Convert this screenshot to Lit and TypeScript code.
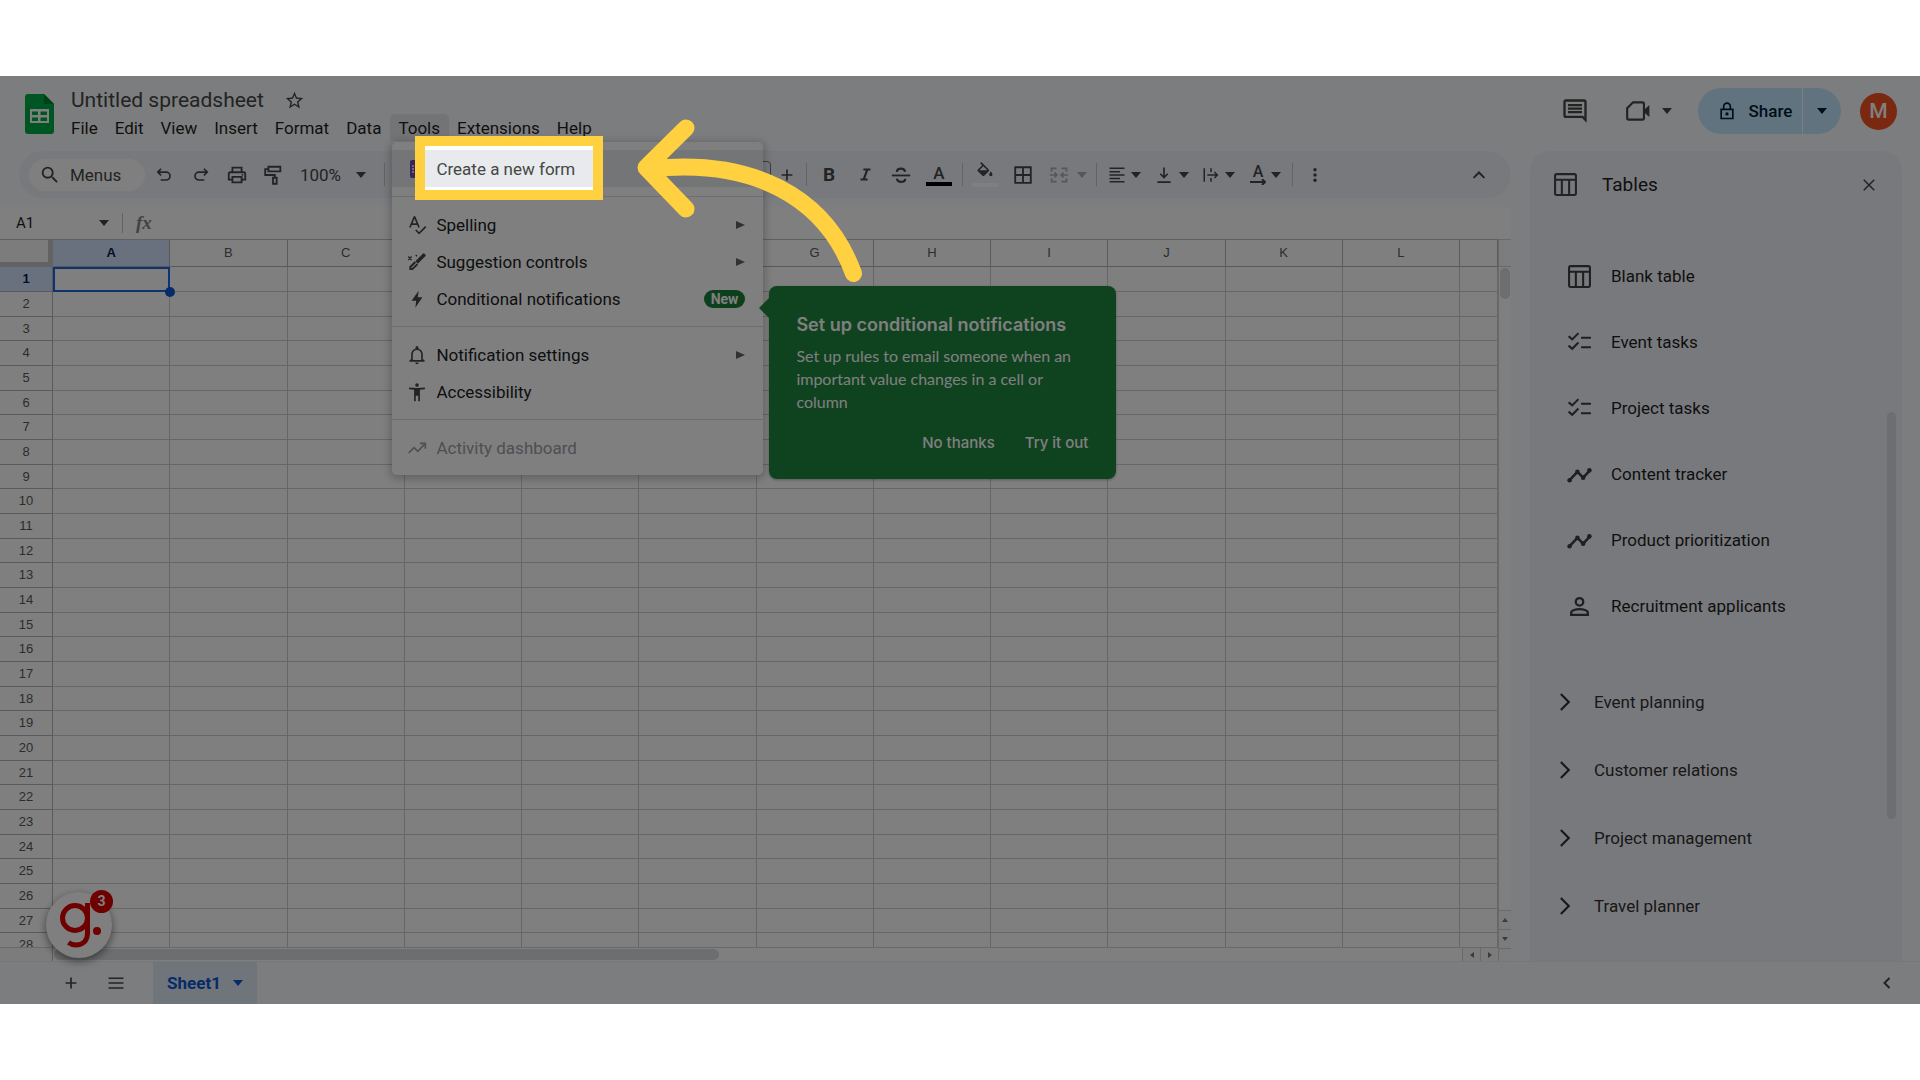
import { LitElement, html, css, svg, nothing } from "lit";
import { customElement } from "lit/decorators.js";
import { classMap } from "lit/directives/class-map.js";

const ic = (body: unknown, size = 22) =>
  html`<svg class="ic" width=${size} height=${size} viewBox="0 0 24 24" aria-hidden="true">${body}</svg>`;
const fill = (d: string) => svg`<path fill="currentColor" fill-rule="evenodd" d=${d} />`;
const line = (d: string, w = 2) =>
  svg`<path fill="none" stroke="currentColor" stroke-width=${w} d=${d} />`;

const caret = html`<svg class="caret" width="10" height="6" viewBox="0 0 10 6" aria-hidden="true"><path fill="currentColor" d="M0 0h10L5 6z" /></svg>`;

const icons = {
  search: fill("M15.5 14h-.79l-.28-.27A6.47 6.47 0 0 0 16 9.5 6.5 6.5 0 1 0 9.5 16c1.61 0 3.09-.59 4.23-1.57l.27.28v.79l5 4.99L20.49 19l-4.99-5zm-6 0C7.01 14 5 11.99 5 9.5S7.01 5 9.5 5 14 7.01 14 9.5 11.99 14 9.5 14z"),
  star: fill("M22 9.24l-7.19-.62L12 2 9.19 8.63 2 9.24l5.46 4.73L5.82 21 12 17.27 18.18 21l-1.63-7.03L22 9.24zM12 15.4l-3.76 2.27 1-4.28-3.32-2.88 4.38-.38L12 6.1l1.71 4.04 4.38.38-3.32 2.88 1 4.28L12 15.4z"),
  comment: fill("M22 4c0-1.1-.9-2-2-2H4c-1.1 0-2 .9-2 2v12c0 1.1.9 2 2 2h14l4 4V4zM20 4v13.17L18.83 16H4V4h16zM6 12h12v2H6zm0-3h12v2H6zm0-3h12v2H6z"),
  meet: svg`${line("M7.5 4H16a1.5 1.5 0 0 1 1.500 1.500V18.500A1.500 1.500 0 0 1 16 20H3.500A1.500 1.500 0 0 1 2 18.500V9.500z")}${fill("M18 10.500l4.500-4v11l-4.500-4z")}`,
  lock: svg`${line("M5 10h14v11H5zM8 10V6.500a4 4 0 0 1 8 0V10")}<circle cx="12" cy="15.500" r="2" fill="currentColor" />`,
  undo: line("M8.500 4.500L4.500 8.500l4 4M5 8.500h9.500a4.700 4.700 0 0 1 0 9.500H8"),
  redo: line("M15.500 4.500l4 4-4 4M19 8.500H9.500a4.700 4.700 0 0 0 0 9.500H16"),
  print: svg`${line("M7 8V4h10v4M7 17H3v-6.500A1.500 1.500 0 0 1 4.500 9h15a1.500 1.500 0 0 1 1.500 1.500V17h-4M7 14h10v6H7z")}<circle cx="18" cy="11.800" r="1" fill="currentColor" />`,
  paint: line("M7 3h13v5H7zM7 5.500H3.500V12H14v3M12 15h4v6.500h-4z"),
  plus: line("M12 5.500v13M5.500 12h13"),
  minus: line("M5.500 12h13"),
  italic: line("M9 5h10M5 19h10M14.500 5l-5 14", 3),
  strike: svg`${line("M2 12.500h20")}${line("M16.500 8.500C16 6 14 5 12 5 9.500 5 7.700 6.200 7.500 8.500M7.500 16c.3 2.300 2.200 3.500 4.500 3.500s4.500-1.200 4.500-3.500", 2.400)}`,
  bucket: svg`${fill("M16.560 8.940L7.620 0 6.210 1.410l2.380 2.380-5.150 5.150a1.500 1.500 0 0 0 0 2.120l5.500 5.500c.58.58 1.540.58 2.120 0l5.500-5.500c.58-.58.58-1.530 0-2.120zM5.210 10L10 5.210 14.790 10zM19 11.500s-2 2.170-2 3.500a2 2 0 0 0 4 0c0-1.330-2-3.500-2-3.500z")}`,
  borders: line("M3.500 3.500h17v17h-17zM12 3.500v17M3.500 12h17"),
  merge: line("M3 8V4h6M15 4h6v4M3 16v4h6M15 20h6v-4M1 12h8M6.500 9l3 3-3 3M23 12h-8M17.500 9l-3 3 3 3"),
  align: line("M2 3h20M2 7.500h14M2 12h20M2 16.500h14M2 21h20"),
  bottom: line("M12 3v12M7.500 10.500L12 15l4.500-4.500M4 20.500h16"),
  wrap: line("M3 3v18M12 3v5M12 16v5M7 12h13M16.500 8l4 4-4 4"),
  dots: svg`<circle cx="12" cy="5" r="2.300" fill="currentColor" /><circle cx="12" cy="12" r="2.300" fill="currentColor" /><circle cx="12" cy="19" r="2.300" fill="currentColor" />`,
  up: line("M5.500 15.500L12 9l6.500 6.500", 2.400),
  left: line("M15 6l-6 6 6 6", 2.400),
  right: line("M7 2.500L16.500 12 7 21.500", 2.600),
  close: line("M5 5l14 14M19 5L5 19"),
  rows: line("M2 5.500h20M2 12h20M2 18.500h20"),
  table: svg`<rect x="2" y="2" width="20" height="20" rx="1.500" fill="none" stroke="currentColor" stroke-width="2" />${line("M2 7.500h20M8.500 7.500V22M15.500 7.500V22")}`,
  tasks: line("M1.500 6l3.500 3 6-6M1.500 15l3.500 3 6-6M13.500 7.500H23M13.500 16.500H23"),
  chart: svg`${line("M2.500 17.500l7.500-8 5.500 5.500 6.500-7", 2.400)}<circle cx="2.500" cy="17.500" r="2.200" fill="currentColor" /><circle cx="10" cy="9.500" r="2.200" fill="currentColor" /><circle cx="15.500" cy="15" r="2.200" fill="currentColor" /><circle cx="21.500" cy="8" r="2.200" fill="currentColor" />`,
  person: svg`<circle cx="12" cy="7.500" r="3.600" fill="none" stroke="currentColor" stroke-width="2.200" />${line("M4 20V18c0-2.300 4.800-3.500 8-3.500s8 1.200 8 3.500v2z", 2.200)}`,
  spell: svg`${line("M3.500 15L8.700 2.500h.6L14.500 15M5.500 11h7")}${line("M10.500 18l4 4L22.500 14")}`,
  wand: svg`${fill("M16.500 4.500L19 2a1.500 1.500 0 0 1 2 0l1 1a1.500 1.500 0 0 1 0 2l-2.500 2.500L13 14l-3-3z")}${line("M10 12l-6 6v2.500h2.500l6-6", 2.400)}${line("M1.500 5.500l4 4M5.500 5.500l-4 4M10.500 3.500l1.500 1.500", 1.600)}`,
  bolt: fill("M14 2L5.500 14H11l-1 8.500L18.500 10H13z"),
  bell: fill("M12 23c1.100 0 2-.9 2-2h-4c0 1.100.9 2 2 2zm7-6v-6c0-3.070-1.900-5.940-5.200-6.620V3a1.800 1.800 0 0 0-3.600 0v1.380C6.900 5.060 5 7.920 5 11v6l-2 1v2h18v-2l-2-1zm-2 1H7v-7c0-2.700 2-5 5-5s5 2.300 5 5v7z"),
  access: fill("M12 1.500a2.200 2.200 0 1 1 0 4.400 2.200 2.200 0 0 1 0-4.400zM21.500 8.700L15.500 9.300V23h-2v-6.500h-3V23h-2V9.300L2.500 8.700V6.700C8 7.300 16 7.300 21.500 6.700z"),
  trend: line("M2 18l6.500-6.500 4.500 4.500L21.500 7M15.500 6.500H22V13"),
};

const COLS = "ABCDEFGHIJKL".split("");
const ROWS = Array.from({ length: 28 }, (_, i) => i + 1);

const TABLES: [keyof typeof icons, string][] = [
  ["table", "Blank table"],
  ["tasks", "Event tasks"],
  ["tasks", "Project tasks"],
  ["chart", "Content tracker"],
  ["chart", "Product prioritization"],
  ["person", "Recruitment applicants"],
];
const SECTIONS = ["Event planning", "Customer relations", "Project management", "Travel planner"];

const base = css`
  * { box-sizing: border-box; }
  button, input { font: inherit; color: inherit; background: none; border: 0; padding: 0; margin: 0; }
  button { display: inline-flex; align-items: center; justify-content: center; white-space: nowrap; }
  ul { list-style: none; margin: 0; padding: 0; }
  .ic, .caret { display: block; flex: none; }
`;

@customElement("tools-menu")
export class ToolsMenu extends LitElement {
  static styles = [base, css`
    :host { display: block; width: 371px; }
    .menu { background: #fff; border-radius: 5px; padding: 8px 0 9px; box-shadow: 0 2px 8px 2px rgba(60, 64, 67, 0.3); }
    .item { width: 100%; height: 37px; padding: 0 18px 0 15px; gap: 9px; justify-content: flex-start; color: #202124; font-size: 17px; }
    .item .ic { color: #444746; }
    .on { background: #e8eaed; color: #444746; }
    .off, .off .ic { color: #9aa0a6; }
    .label { flex: 1; text-align: left; }
    .sub { color: #5f6368; }
    hr { border: 0; height: 1px; margin: 9px 0; background: #dadce0; }
    .new { background: #188038; color: #fff; font-size: 14px; font-weight: 700; line-height: 18px; padding: 0 7px; border-radius: 9px; }
    .tip { position: absolute; left: 377px; top: 144px; width: 347px; background: #1e843e; color: #fff; border-radius: 8px; padding: 27px 20px 21px 27px; font-family: Inter, sans-serif; box-shadow: 0 1px 3px rgba(0, 0, 0, 0.3); }
    .tip::before { content: ""; position: absolute; left: -10px; top: 11px; border: solid transparent; border-width: 11px 11px 11px 0; border-right-color: #1e843e; }
    h2 { margin: 0; font-size: 18px; line-height: 24px; font-weight: 600; }
    p { margin: 7px 0 0; font-family: Lato, sans-serif; font-size: 16px; line-height: 23px; padding-right: 20px; }
    .acts { display: flex; justify-content: flex-end; gap: 14px; margin-top: 13px; }
    .acts button { height: 32px; padding: 0 8px; font-size: 15px; font-weight: 500; }
  `];
  item(icon: unknown, label: string, end: unknown = nothing, cls = "") {
    return html`<button class="item ${cls}" role="menuitem" ?disabled=${cls === "off"}>${icon}<span class="label">${label}</span>${end}</button>`;
  }
  render() {
    const sub = html`<svg class="sub" width="9" height="8" viewBox="0 0 9 8" aria-hidden="true"><path fill="currentColor" d="M0 0l9 4-9 4z" /></svg>`;
    const form = html`<svg class="ic" width="20" height="20" viewBox="0 0 20 20" aria-hidden="true"><rect x="3" y="1" width="14" height="18" rx="2" fill="#7248b9" /><path stroke="#fff" stroke-width="1.500" d="M5 7h2M5 10h2M5 13h2M9 7h5M9 10h5M9 13h5" /></svg>`;
    return html`
      <div class="menu" role="menu">
        ${this.item(form, "Create a new form", nothing, "on")}
        <hr />
        ${this.item(ic(icons.spell, 20), "Spelling", sub)}
        ${this.item(ic(icons.wand, 20), "Suggestion controls", sub)}
        ${this.item(ic(icons.bolt, 20), "Conditional notifications", html`<span class="new">New</span>`)}
        <hr />
        ${this.item(ic(icons.bell, 20), "Notification settings", sub)}
        ${this.item(ic(icons.access, 20), "Accessibility")}
        <hr />
        ${this.item(ic(icons.trend, 20), "Activity dashboard", nothing, "off")}
      </div>
      <section class="tip">
        <h2>Set up conditional notifications</h2>
        <p>Set up rules to email someone when an important value changes in a cell or column</p>
        <div class="acts"><button>No thanks</button><button>Try it out</button></div>
      </section>`;
  }
}

@customElement("sheet-toolbar")
export class SheetToolbar extends LitElement {
  static styles = [base, css`
    :host { display: block; }
    .bar { display: flex; align-items: center; height: 47px; margin-left: 19px; padding: 0 14px 0 10px; background: #f0f3fa; border-radius: 24px; color: #444746; }
    .find { width: 116px; height: 32px; background: #fff; border-radius: 16px; gap: 9px; padding-left: 10px; justify-content: flex-start; font-size: 17px; }
    .b { width: 36px; height: 36px; flex: none; }
    .u { width: 38px; }
    .w { width: 40px; }
    .n { width: 32px; }
    .zoom { width: 84px; gap: 15px; font-size: 17px; }
    .font { width: 280px; gap: 14px; font-size: 17px; }
    .size { width: 36px; height: 28px; text-align: center; border: 1px solid #747775; border-radius: 4px; font-size: 17px; }
    .sep { width: 1px; height: 23px; margin: 0 4px 0 3px; background: #c7c7c7; flex: none; }
    .wide { margin: 0 10px 0 9px; }
    .combo { width: 47px; height: 36px; gap: 5px; flex: none; }
    .m { width: 50px; gap: 8px; }
    .faded { opacity: 0.4; }
    .bold { font: 700 19px Roboto, sans-serif; }
    .ink { flex-direction: column; font: 500 17px/18px Roboto, sans-serif; }
    .ink::after { content: ""; width: 26px; height: 4px; background: #000; }
    .pour { flex-direction: column; gap: 1px; }
    .pour::after { content: ""; width: 26px; height: 4px; background: #fff; }
    .rot { display: flex; flex-direction: column; align-items: center; font: 500 16px/14px Roboto, sans-serif; }
    .end { margin-left: auto; }
  `];
  render() {
    const combo = (icon: unknown, label: string, cls = "") =>
      html`<button class="combo ${cls}" aria-label=${label}>${icon}${caret}</button>`;
    const b = (icon: unknown, label: string, cls = "") =>
      html`<button class="b ${cls}" aria-label=${label}>${icon}</button>`;
    return html`<div class="bar" role="toolbar">
      <button class="find">${ic(icons.search)}Menus</button>
      ${b(ic(icons.undo, 20), "Undo", "u")}${b(ic(icons.redo, 20), "Redo")}${b(ic(icons.print), "Print")}${b(ic(icons.paint), "Paint format")}
      <button class="zoom" aria-label="Zoom">100% ${caret}</button>
      <span class="sep wide"></span>
      <button class="font">Default (Arial) ${caret}</button>
      <span class="sep wide"></span>
      ${b(ic(icons.minus, 20), "Decrease font size", "w")}
      <input class="size" aria-label="Font size" value="10" />
      ${b(ic(icons.plus, 20), "Increase font size", "n")}
      <span class="sep"></span>
      ${b("B", "Bold", "bold")}${b(ic(icons.italic, 17), "Italic")}${b(ic(icons.strike), "Strikethrough")}
      ${b("A", "Text color", "ink w")}
      <span class="sep"></span>
      ${b(ic(icons.bucket, 20), "Fill color", "pour")}${b(ic(icons.borders, 22), "Borders", "w")}
      ${combo(ic(icons.merge, 20), "Merge cells", "m faded")}
      <span class="sep"></span>
      ${combo(ic(icons.align, 18), "Horizontal align")}${combo(ic(icons.bottom, 20), "Vertical align")}${combo(ic(icons.wrap, 18), "Text wrapping")}
      ${combo(html`<span class="rot">A<svg width="16" height="6" viewBox="0 0 16 6" aria-hidden="true"><path fill="none" stroke="currentColor" stroke-width="2" d="M0 3h14M12 0l3 3-3 3" /></svg></span>`, "Text rotation")}
      <span class="sep"></span>
      ${b(ic(icons.dots, 18), "More")}
      ${b(ic(icons.up, 20), "Hide the menus", "end")}
    </div>`;
  }
}

@customElement("sheet-grid")
export class SheetGrid extends LitElement {
  static styles = [base, css`
    :host { display: flex; flex: 1 1 0px; min-height: 0; overflow: hidden; background: #fff; }
    .main { flex: 1; min-width: 0; display: flex; flex-direction: column; }
    .clip { flex: 1 1 0px; min-height: 0; overflow: hidden; }
    table { width: 100%; table-layout: fixed; border-collapse: separate; border-spacing: 0; border-top: 1px solid #c0c0c0; }
    th, td { padding: 0; height: 25px; border: solid #cfcfcf; border-width: 0 1px 1px 0; line-height: 16px; }
    tr:nth-child(3n) th, tr:nth-child(3n) td { height: 24px; }
    th { font-family: "Liberation Sans", Arial, sans-serif; font-size: 13px; font-weight: 400; color: #575a5a; border-color: #b4b4b4; }
    thead th { height: 27px; }
    .rh { width: 53px; }
    .corner { background: #f8f9fa; border-width: 0 5px 5px 0; border-color: #c4c7c5; }
    .last { width: 38px; }
    .sel { background: #d3e3fd; color: #041e49; font-weight: 700; }
    .cur { position: relative; }
    .cur::before { content: ""; position: absolute; inset: 0 -1px -1px 0; border: 2px solid #1a66e0; }
    .cur::after { content: ""; position: absolute; right: -6px; bottom: -6px; width: 10px; height: 10px; border-radius: 50%; background: #0b57d0; }
    .hbar { display: flex; height: 14px; border-top: 1px solid #d3d3d3; }
    .stub { width: 53px; border-right: 1px solid #c0c0c0; background: #f8f9fa; }
    .track { flex: 1; padding: 1px; }
    .thumb { width: calc(47% + 4px); height: 11px; border-radius: 6px; background: #dadce0; }
    .arr { width: 18px; border-left: 1px solid #d3d3d3; background: #f8f9fa; color: #747775; }
    .vbar { width: 13px; border-left: 1px solid #d3d3d3; display: flex; flex-direction: column; }
    .vtop { height: 28px; border: solid #d3d3d3; border-width: 1px 0; background: #f8f9fa; }
    .vtrack { flex: 1; padding: 1px; }
    .vthumb { height: 31px; width: 10px; border-radius: 5px; background: #dadce0; }
    .varr { height: 19px; border-top: 1px solid #d3d3d3; background: #f8f9fa; color: #747775; }
    .vend { height: 13px; border-top: 1px solid #d3d3d3; background: #f8f9fa; }
  `];
  tri(d: string) {
    return html`<svg width="6" height="6" viewBox="0 0 6 6" aria-hidden="true"><path fill="currentColor" d=${d} /></svg>`;
  }
  render() {
    return html`
      <div class="main">
        <div class="clip"><table>
          <thead><tr>
            <th class="rh corner"></th>
            ${COLS.map((c, i) => html`<th scope="col" class=${classMap({ sel: i === 0 })}>${c}</th>`)}
            <th class="last"></th>
          </tr></thead>
          <tbody>${ROWS.map((r) => html`<tr>
            <th scope="row" class=${classMap({ rh: true, sel: r === 1 })}>${r}</th>
            ${COLS.map((_, i) => html`<td class=${classMap({ cur: r === 1 && i === 0 })}></td>`)}
            <td></td>
          </tr>`)}</tbody>
        </table></div>
        <div class="hbar">
          <span class="stub"></span>
          <div class="track"><div class="thumb"></div></div>
          <button class="arr" aria-label="Scroll left">${this.tri("M5 0v6L1 3z")}</button>
          <button class="arr" aria-label="Scroll right">${this.tri("M1 0v6l4-3z")}</button>
        </div>
      </div>
      <div class="vbar">
        <div class="vtop"></div>
        <div class="vtrack"><div class="vthumb"></div></div>
        <button class="varr" aria-label="Scroll up">${this.tri("M0 5h6L3 1z")}</button>
        <button class="varr" aria-label="Scroll down">${this.tri("M0 1h6L3 5z")}</button>
        <div class="vend"></div>
      </div>`;
  }
}

@customElement("tables-panel")
export class TablesPanel extends LitElement {
  static styles = [base, css`
    :host { display: block; position: relative; flex: none; width: 372px; background: #f0f3fa; border-radius: 20px 20px 0 0; padding-bottom: 21px; color: #1f1f1f; }
    header { display: flex; align-items: center; height: 67px; padding: 0 20px 0 23px; }
    header .ic { color: #444746; }
    h2 { flex: 1; margin: 0 0 0 24px; font-size: 19px; font-weight: 400; }
    .x { width: 26px; height: 26px; }
    .list { padding-top: 25px; }
    .list button { width: 100%; height: 66px; padding-left: 37px; gap: 19px; justify-content: flex-start; font-size: 17px; }
    .list .ic { color: #3c3f3e; }
    .secs { padding-top: 29px; }
    .secs button { width: 100%; height: 68px; padding-left: 25px; gap: 19px; justify-content: flex-start; font-size: 17px; color: #303030; }
    .thumb { position: absolute; right: 6px; top: 261px; height: 407px; width: 9px; border-radius: 5px; background: #dadce0; }
  `];
  render() {
    return html`
      <header>${ic(icons.table, 25)}<h2>Tables</h2><button class="x" aria-label="Close">${ic(icons.close, 18)}</button></header>
      <ul class="list">${TABLES.map(([i, t]) => html`<li><button>${ic(icons[i], 25)}${t}</button></li>`)}</ul>
      <ul class="secs">${SECTIONS.map((t) => html`<li><button>${ic(icons.right, 20)}${t}</button></li>`)}</ul>
      <div class="thumb"></div>`;
  }
}

@customElement("app-root")
export class AppRoot extends LitElement {
  static styles = [base, css`
    :host { display: block; background: #fff; padding: 76px 0; font-family: Roboto, "Liberation Sans", sans-serif; }
    .shot { position: relative; overflow: hidden; background: #f9fbfd; }
    .head { display: flex; padding: 10px 23px 10px 25px; gap: 8px; }
    .logo { margin-top: 8px; flex: none; }
    .brand { flex: 1; }
    .row { display: flex; align-items: center; height: 28px; padding-left: 9px; gap: 20px; color: #444746; }
    h1 { margin: 0; font-size: 21px; line-height: 28px; font-weight: 400; }
    .menus { display: flex; margin-left: 1px; }
    .menus li { position: relative; }
    .menus .mb { height: 27px; padding: 0 9px 0 8px; font-size: 17px; color: #1f1f1f; border-radius: 5px 5px 0 0; }
    .menus .open { background: #e6e8ec; }
    tools-menu { position: absolute; left: 2px; top: 28px; z-index: 2; }
    .right { display: flex; align-items: center; height: 50px; color: #444746; }
    .meet { gap: 11px; margin: 0 26px 0 36px; }
    .share { display: flex; height: 46px; border-radius: 23px; overflow: hidden; background: #c2e7ff; color: #001d35; }
    .sh { width: 105px; gap: 12px; padding-left: 9px; font-size: 17px; font-weight: 500; border-right: 1px solid #fff; }
    .shc { width: 38px; }
    .me { width: 37px; height: 37px; margin-left: 19px; border-radius: 50%; background: #f4511e; color: #fff; font-size: 21px; font-weight: 500; }
    .body { display: flex; gap: 19px; padding-right: 18px; }
    .work { flex: 1; min-width: 0; display: flex; flex-direction: column; }
    .formula { display: flex; align-items: center; height: 32px; margin-top: 9px; padding-left: 16px; background: #fff; color: #444746; }
    .name { width: 83px; font-size: 15px; color: #1f1f1f; }
    .fsep { width: 1px; height: 20px; background: #c7c7c7; margin: 0 13px; }
    .fx { font: italic 700 19px "Liberation Serif", serif; color: #80868b; }
    .foot { display: flex; align-items: center; height: 43px; border-top: 1px solid #eceef0; padding: 0 20px 0 48px; color: #444746; }
    .fb { width: 45px; height: 42px; }
    .tab { width: 104px; height: 42px; margin-left: 15px; gap: 12px; background: #e1e9f7; color: #0b57d0; font-size: 17px; font-weight: 700; }
    .go { width: 26px; height: 26px; margin-left: auto; }
    .guide { position: absolute; left: 46px; bottom: 46px; width: 66px; height: 66px; border-radius: 50%; background: #fff; box-shadow: 0 3px 8px rgba(0, 0, 0, 0.5); z-index: 3; }
    .count { position: absolute; right: -1px; top: -2px; width: 23px; height: 23px; border-radius: 50%; background: #dc0000; color: #fff; font-size: 14px; line-height: 23px; font-weight: 700; text-align: center; }
    .spot { position: absolute; left: 415px; top: 60px; width: 188px; height: 64px; border: 10px solid #ffd040; box-shadow: 0 0 0 3000px rgba(0, 0, 0, 0.5); z-index: 4; pointer-events: none; }
    .pointer { position: absolute; left: 630px; top: 36px; z-index: 5; pointer-events: none; }
  `];
  render() {
    const menus = ["File", "Edit", "View", "Insert", "Format", "Data", "Tools", "Extensions", "Help"];
    return html`<div class="shot">
      <header class="head">
        <svg class="logo" width="29" height="40" viewBox="0 0 29 40" aria-hidden="true">
          <path fill="#00ac47" d="M3 0h16l10 10v27a3 3 0 0 1-3 3H3a3 3 0 0 1-3-3V3a3 3 0 0 1 3-3z" />
          <path fill="#00832d" d="M19 0l10 10H19z" />
          <path fill="#fff" fill-rule="evenodd" d="M5 15h19v14H5zM7 17.500v3.500h6v-3.500zM15.500 17.500v3.500h6.500v-3.500zM7 23.500v3.500h6v-3.500zM15.500 23.500v3.500h6.500v-3.500z" />
        </svg>
        <div class="brand">
          <div class="row"><h1>Untitled spreadsheet</h1><button aria-label="Star">${ic(icons.star, 21)}</button></div>
          <ul class="menus">${menus.map((m) => html`<li>
            <button class=${classMap({ mb: true, open: m === "Tools" })}>${m}</button>
            ${m === "Tools" ? html`<tools-menu></tools-menu>` : nothing}
          </li>`)}</ul>
        </div>
        <div class="right">
          <button aria-label="Comments">${ic(icons.comment, 28)}</button>
          <button class="meet" aria-label="Join a call">${ic(icons.meet, 26)}${caret}</button>
          <div class="share"><button class="sh">${ic(icons.lock, 20)}Share</button><button class="shc" aria-label="Share options">${caret}</button></div>
          <button class="me" aria-label="Account">M</button>
        </div>
      </header>
      <div class="body">
        <div class="work">
          <sheet-toolbar></sheet-toolbar>
          <div class="formula">
            <input class="name" aria-label="Name box" value="A1" />${caret}<span class="fsep"></span><span class="fx">fx</span>
          </div>
          <sheet-grid></sheet-grid>
        </div>
        <tables-panel></tables-panel>
      </div>
      <footer class="foot">
        <button class="fb" aria-label="Add sheet">${ic(icons.plus, 20)}</button>
        <button class="fb" aria-label="All sheets">${ic(icons.rows, 18)}</button>
        <button class="tab">Sheet1 ${caret}</button>
        <button class="go" aria-label="Show side panel">${ic(icons.left, 20)}</button>
      </footer>
      <button class="guide" aria-label="Guide">
        <svg width="66" height="66" viewBox="0 0 66 66" aria-hidden="true">
          <circle cx="29" cy="26" r="12.500" fill="none" stroke="#dc0000" stroke-width="5" />
          <path fill="none" stroke="#dc0000" stroke-width="5" d="M41.500 11v30c0 8-5 12-11.500 12-3 0-5-.6-7.500-2.500" />
          <circle cx="51" cy="39" r="4" fill="#dc0000" />
        </svg>
        <span class="count">3</span>
      </button>
      <div class="spot"></div>
      <svg class="pointer" width="240" height="180" viewBox="630 112 240 180" aria-hidden="true">
        <path fill="none" stroke="#ffd040" stroke-width="17" stroke-linecap="round" stroke-linejoin="round" d="M686 128L646 167.500L686 209M650 169C750 158 825 195 853.500 273.500" />
      </svg>
    </div>`;
  }
}
